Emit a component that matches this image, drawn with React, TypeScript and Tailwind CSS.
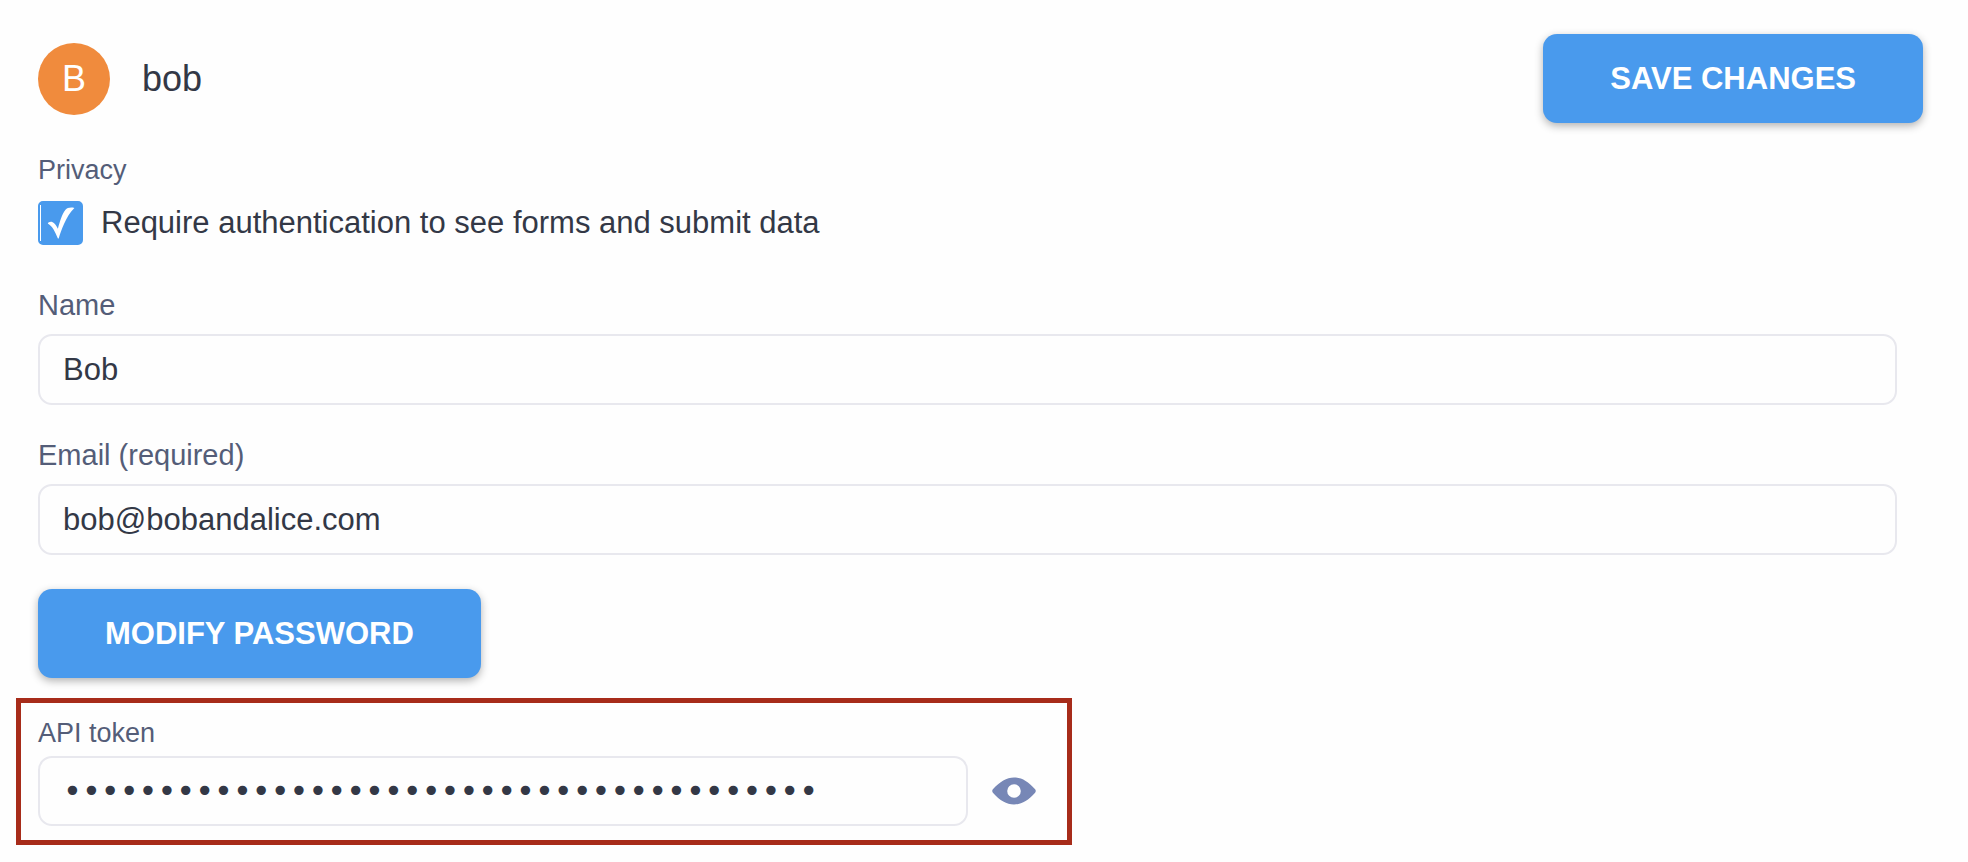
import { useState } from "react";
import type { InputHTMLAttributes, ReactNode } from "react";

const inputClass =
  "block h-[71px] w-full rounded-[14px] border-2 border-[#e8e8ee] bg-transparent px-[23px] text-[31px] text-[#333846] outline-none focus:border-[#499aed]";

function PrimaryButton({ type, children }: { type: "button" | "submit"; children: ReactNode }) {
  return (
    <button
      type={type}
      className="h-[89px] shrink-0 cursor-pointer rounded-[14px] bg-[#499aed] px-[67px] pt-0.5 text-[31px] font-bold text-white uppercase shadow-[0_3px_8px_rgba(0,0,0,0.3)]"
    >
      {children}
    </button>
  );
}

function Field({ id, label, ...rest }: { id: string; label: string } & InputHTMLAttributes<HTMLInputElement>) {
  return (
    <div className="mr-[26px] flex flex-col gap-[11px]">
      <label htmlFor={id} className="text-[29px] leading-9 text-[#545d78]">
        {label}
      </label>
      <input id={id} className={inputClass} {...rest} />
    </div>
  );
}

function EyeIcon() {
  return (
    <svg viewBox="0 0 44 28" className="h-7 w-11" fill="#7787b6" aria-hidden="true">
      <path
        fillRule="evenodd"
        d="M22 .5C14.500 .5 8 4.500 .9 12.300C0 13.400 0 14.600 .9 15.700C8 23.500 14.500 27.500 22 27.500S36 23.500 43.100 15.700C44 14.600 44 13.400 43.100 12.300C36 4.500 29.500 .5 22 .5ZM22 7.200a6.800 6.800 0 1 1 0 13.600a6.800 6.800 0 0 1 0-13.600Z"
      />
    </svg>
  );
}

export default function App() {
  const [visible, setVisible] = useState(false);

  return (
    <div className="min-h-screen bg-[#fefefe] font-['Liberation_Sans',Arial,sans-serif] text-[#333846]">
      <form className="pt-[34px] pr-[45px] pb-4 pl-[38px]" onSubmit={(e) => e.preventDefault()}>
        <header className="flex items-center justify-between">
          <div className="flex items-center gap-8">
            <div className="flex size-[72px] items-center justify-center rounded-full bg-[#f08b3d] text-[36px] leading-none text-white">
              B
            </div>
            <h1 className="text-[36px] leading-none">bob</h1>
          </div>
          <PrimaryButton type="submit">Save changes</PrimaryButton>
        </header>

        <fieldset className="mt-[29px]">
          <legend className="text-[27px] leading-9 text-[#545d78]">Privacy</legend>
          <label className="mt-[13px] flex w-fit items-center gap-[18px] text-[31px] leading-[44px]">
            <span className="relative block h-11 w-[45px]">
              <input
                type="checkbox"
                defaultChecked
                className="peer block size-full appearance-none rounded-[5px] border-2 border-[#499aed] checked:bg-[#499aed]"
              />
              <svg
                viewBox="0 0 45 44"
                className="pointer-events-none absolute inset-0 hidden size-full peer-checked:block"
                fill="white"
                aria-hidden="true"
              >
                <rect x="2" y="4" width="1" height="36" />
                <path d="M9.800 22.400C10.200 21 12.600 20.200 14.200 20.900C16.600 21.900 18.300 24.500 19.900 27.700C21.800 20.700 24 13 27.500 8.700C29.200 6.700 32.500 6.200 36.400 6.900C31.800 11.500 28.900 16.500 26 23C23.700 28 22 33 20.700 37.400L19.900 37.400C18.300 33.800 17.300 31.500 15.600 28.500C13.800 25.400 12.200 24 9.800 22.400Z" />
              </svg>
            </span>
            Require authentication to see forms and submit data
          </label>
        </fieldset>

        <div className="mt-[42px] flex flex-col gap-8">
          <Field id="name" label="Name" type="text" defaultValue="Bob" />
          <Field id="email" label="Email (required)" type="email" required defaultValue="bob@bobandalice.com" />
        </div>

        <div className="mt-[34px]">
          <PrimaryButton type="button">Modify password</PrimaryButton>
        </div>

        <section className="mt-5 -ml-[22px] max-w-[1056px] border-[5px] border-[#a72c1a] px-[17px] pt-3 pb-[14px]">
          <label htmlFor="token" className="block text-[27px] leading-9 text-[#545d78]">
            API token
          </label>
          <div className="mt-[5px] flex items-center gap-6">
            <div className="w-[930px] min-w-0">
              <input
                id="token"
                type={visible ? "text" : "password"}
                readOnly
                defaultValue="4f1c9a7be02d4835a6c1d97f30b8e25a71cd94e6"
                className="block h-[70px] w-full rounded-[14px] border-2 border-[#e8e8ee] bg-transparent px-[23px] font-['DejaVu_Sans',sans-serif] text-[32px] text-[#333846] outline-none"
              />
            </div>
            <button
              type="button"
              aria-label="Show API token"
              aria-pressed={visible}
              onClick={() => setVisible(!visible)}
              className="shrink-0 cursor-pointer"
            >
              <EyeIcon />
            </button>
          </div>
        </section>
      </form>
    </div>
  );
}
